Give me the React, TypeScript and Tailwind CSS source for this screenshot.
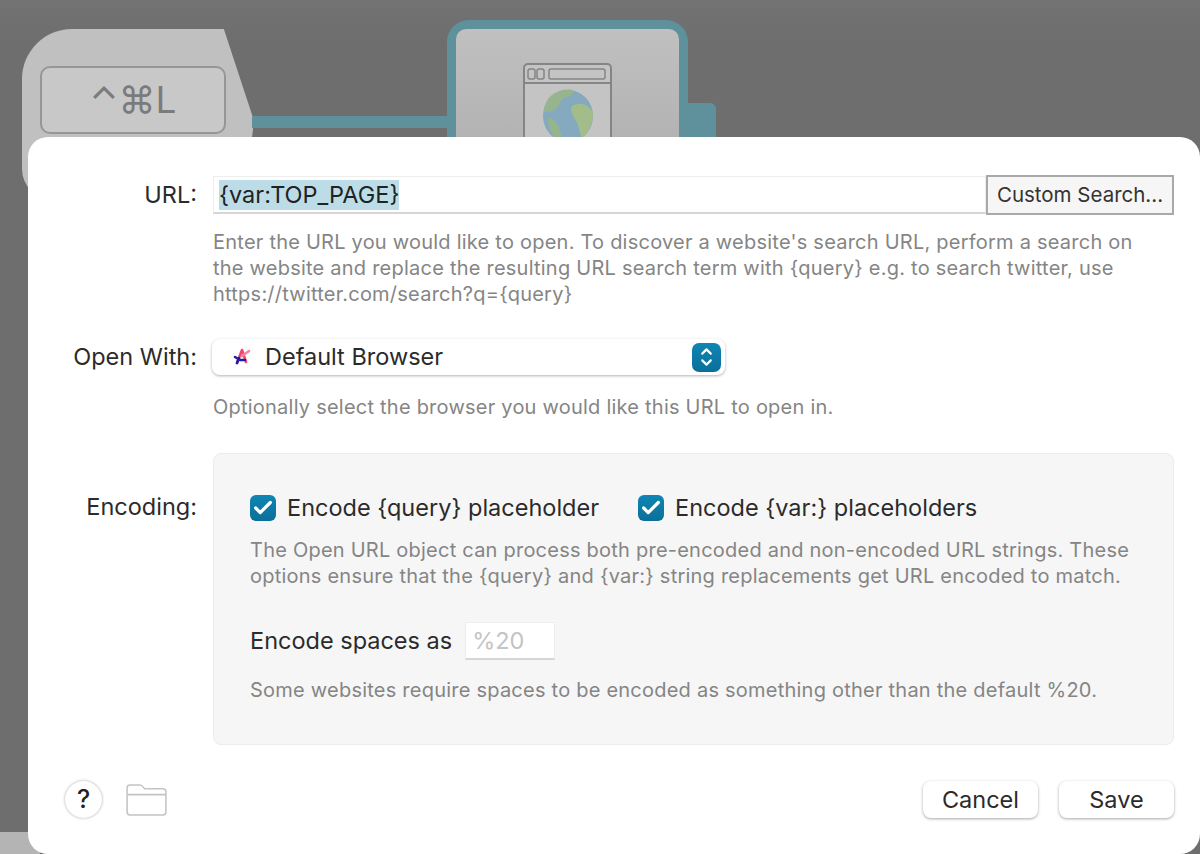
import { ChevronDown, ChevronUp, Check } from "lucide-react";

function Field({ label, labelClass, children }: { label: string; labelClass?: string; children: React.ReactNode }) {
  return (
    <div className="flex">
      <div className={"w-[169px] shrink-0 text-right text-[23.5px] text-[#2b2b2b] " + (labelClass || "")}>{label}</div>
      <div className="ml-4 min-w-0 flex-1">{children}</div>
    </div>
  );
}

function Checkbox({ label }: { label: string }) {
  return (
    <div className="flex items-center gap-[11px]">
      <div className="flex h-[26px] w-[26px] items-center justify-center rounded-[6px] bg-gradient-to-b from-[#0f86b4] to-[#0a6f99]">
        <Check className="h-[22px] w-[22px] text-white" strokeWidth={3.5} />
      </div>
      <span className="text-[23.5px] leading-[28px] text-[#2b2b2b]">{label}</span>
    </div>
  );
}

function Canvas() {
  return (
    <>
      {/* hotkey node */}
      <div className="absolute left-[22px] top-[29px] h-[170px] w-[232px] rounded-tl-[50px] rounded-bl-[30px] bg-[#c0c0c0] [clip-path:polygon(0_0,87%_0,100%_54%,96%_100%,0_100%)]" />
      <div className="absolute left-[40px] top-[66px] flex h-[68px] w-[186px] items-center justify-center rounded-[10px] border-2 border-[#969696] bg-[#c8c8c8] text-[37px] text-[#7b7b7b]">
        ⌃⌘L
      </div>
      {/* connector */}
      <div className="absolute left-[252px] top-[116px] h-[12px] w-[200px] bg-[#5f919c]" />
      {/* url node */}
      <div className="absolute left-[680px] top-[103px] h-[60px] w-[36px] rounded-tr-[6px] bg-[#5f919c]" />
      <div className="absolute left-[447px] top-[20px] h-[140px] w-[241px] rounded-t-[22px] bg-[#5f919c] p-[9px] pb-0">
        <div className="h-full rounded-t-[10px] bg-gradient-to-b from-[#c0c0c0] to-[#b0b0b0]" />
      </div>
      <svg className="absolute left-[522px] top-[62px]" width="90" height="78" viewBox="0 0 90 78">
        <rect x="2" y="2" width="87" height="90" rx="4" fill="#c4c4c4" stroke="#858585" strokeWidth="2" />
        <line x1="2" y1="21" x2="89" y2="21" stroke="#858585" strokeWidth="2" />
        <rect x="6" y="7" width="7" height="10" rx="2" fill="none" stroke="#858585" strokeWidth="1.5" />
        <rect x="15" y="7" width="7" height="10" rx="2" fill="none" stroke="#858585" strokeWidth="1.5" />
        <rect x="27" y="7" width="56" height="10" rx="2" fill="none" stroke="#858585" strokeWidth="1.5" />
        <ellipse cx="46" cy="54" rx="25" ry="26" fill="#85a9be" />
        <path d="M30 33 C36 28 48 26 52 29 C50 36 42 33 38 40 C36 48 30 50 22 50 C22 42 26 36 30 33Z" fill="#96b58e" />
        <path d="M50 44 C58 40 66 42 71 50 C71 62 66 72 60 76 C56 70 58 62 52 56 C50 52 48 48 50 44Z" fill="#a3bd8a" />
        <path d="M26 56 C32 56 38 62 40 78 L34 78 C28 70 26 62 26 56Z" fill="#96b58e" />
      </svg>
    </>
  );
}

export default function App() {
  return (
    <div
      className="relative h-[854px] w-[1200px] overflow-hidden bg-[#6e6e6e]"
      style={{ fontFamily: "Inter, 'Noto Sans', sans-serif" }}
    >
      <div className="absolute inset-x-0 top-0 h-[40px] bg-gradient-to-b from-[#737373] to-[#6e6e6e]" />
      <Canvas />
      <div className="absolute bottom-0 left-0 h-[22px] w-[40px] bg-[#b4b4b4]" />

      {/* dialog */}
      <div className="absolute left-[28px] top-[137px] flex h-[717px] w-[1172px] flex-col rounded-[20px] bg-white pr-[26px] pt-[39px]">
        <Field label="URL:" labelClass="leading-[38px]">
          <div className="flex h-[38px]">
            <div className="flex flex-1 items-center border border-[#eeeeee] border-b-2 border-b-[#d6d6d6] pl-[5px]">
              <span className="bg-[#bcdde8] text-[23.5px] leading-[30px] text-[#222222]">{"{var:TOP_PAGE}"}</span>
            </div>
            <button className="-mt-px h-[40px] w-[188px] border-2 border-[#a9a9a9] bg-[#f6f6f6] text-[20.5px] text-[#333333]">
              Custom Search...
            </button>
          </div>
          <p className="mt-[15px] text-[20px] leading-[26px] tracking-[0.23px] text-[#858585]">
            Enter the URL you would like to open. To discover a website's search URL, perform a search on
            <br />
            the website and replace the resulting URL search term with {"{query}"} e.g. to search twitter, use
            <br />
            {"https://twitter.com/search?q={query}"}
          </p>
        </Field>

        <div className="mt-[32px]">
          <Field label="Open With:" labelClass="leading-[36px]">
            <div className="-ml-px flex h-[36px] w-[513px] items-center rounded-[8px] bg-white pl-[19px] pr-[4px] shadow-[0_1px_3px_rgba(0,0,0,0.3)]">
              <svg width="22" height="22" viewBox="0 0 22 22" fill="none" strokeWidth="2.6" strokeLinecap="round" strokeLinejoin="round">
                <path d="M6 17 L11 4 L15 16" stroke="#f7456b" />
                <path d="M11 10 L18 5" stroke="#f9839f" />
                <path d="M4 11 L9 14 L14 14" stroke="#1a1fa8" />
                <path d="M6 17 L8 12" stroke="#1a1fa8" />
              </svg>
              <span className="ml-[12px] flex-1 text-[23.5px] text-[#2b2b2b]">Default Browser</span>
              <div className="flex h-[29px] w-[29px] flex-col items-center justify-center rounded-[7px] bg-gradient-to-b from-[#0f86b4] to-[#0a6f99]">
                <ChevronUp className="-mb-[3px] h-[17px] w-[17px] text-white" strokeWidth={3} />
                <ChevronDown className="-mt-[3px] h-[17px] w-[17px] text-white" strokeWidth={3} />
              </div>
            </div>
            <p className="mt-[19px] text-[20px] leading-[26px] tracking-[0.23px] text-[#858585]">
              Optionally select the browser you would like this URL to open in.
            </p>
          </Field>
        </div>

        <div className="mt-[33px]">
          <Field label="Encoding:" labelClass="pt-[40px] leading-[28px]">
            <div className="h-[292px] rounded-[8px] border border-[#ececec] bg-[#f6f6f6] pl-[36px] pt-[40px]">
              <div className="flex gap-[39px]">
                <Checkbox label="Encode {query} placeholder" />
                <Checkbox label="Encode {var:} placeholders" />
              </div>
              <p className="mt-[15px] text-[20px] leading-[26px] tracking-[0.23px] text-[#858585]">
                The Open URL object can process both pre-encoded and non-encoded URL strings. These
                <br />
                options ensure that the {"{query}"} and {"{var:}"} string replacements get URL encoded to match.
              </p>
              <div className="mt-[33px] flex items-center gap-[13px]">
                <span className="text-[23.5px] text-[#2b2b2b]">Encode spaces as</span>
                <div className="flex h-[38px] w-[90px] items-center border border-[#eeeeee] border-b-2 border-b-[#d6d6d6] bg-white pl-[6px] text-[23.5px] text-[#c4c4c4]">
                  %20
                </div>
              </div>
              <p className="mt-[17px] text-[20px] leading-[26px] tracking-[0.23px] text-[#858585]">
                Some websites require spaces to be encoded as something other than the default %20.
              </p>
            </div>
          </Field>
        </div>

        <div className="mt-[36px] flex items-center pl-[37px]">
          <div className="flex h-[37px] w-[37px] items-center justify-center rounded-full bg-white text-[25px] font-medium text-[#222222] shadow-[0_0_3px_rgba(0,0,0,0.35)]">
            ?
          </div>
          <svg className="ml-[24px]" width="41" height="33" viewBox="0 0 42 34" fill="none" stroke="#c4c4c4" strokeWidth="1.6">
            <path d="M1 5 Q1 2 4 2 H14 Q16 2 17 3.5 L19 6 H38 Q41 6 41 9 V30 Q41 33 38 33 H4 Q1 33 1 30Z" />
            <line x1="1" y1="12" x2="41" y2="12" />
          </svg>
          <div className="ml-auto flex gap-[21px]">
            <button className="h-[37px] w-[115px] rounded-[8px] bg-white text-[23.5px] text-[#2b2b2b] shadow-[0_1px_3px_rgba(0,0,0,0.35)]">
              Cancel
            </button>
            <button className="h-[37px] w-[115px] rounded-[8px] bg-white text-[23.5px] text-[#2b2b2b] shadow-[0_1px_3px_rgba(0,0,0,0.35)]">
              Save
            </button>
          </div>
        </div>
      </div>
    </div>
  );
}
